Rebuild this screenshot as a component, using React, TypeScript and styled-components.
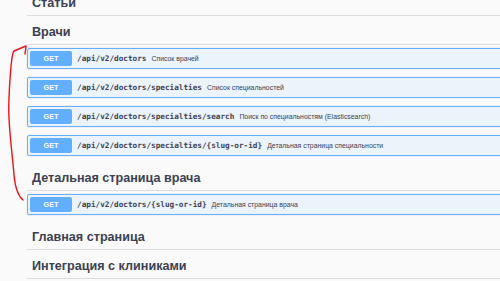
import React from 'react';
import styled, { createGlobalStyle } from 'styled-components';

const GlobalStyle = createGlobalStyle`
  html, body {
    margin: 0;
    padding: 0;
    background: #fafafa;
    overflow: hidden;
  }
`;

interface Operation {
  method: string;
  path: string;
  summary: string;
}

interface Tag {
  name: string;
  operations: Operation[];
}

const tags: Tag[] = [
  { name: 'Статьи', operations: [] },
  {
    name: 'Врачи',
    operations: [
      { method: 'GET', path: '/api/v2/doctors', summary: 'Список врачей' },
      { method: 'GET', path: '/api/v2/doctors/specialties', summary: 'Список специальностей' },
      { method: 'GET', path: '/api/v2/doctors/specialties/search', summary: 'Поиск по специальностям (Elasticsearch)' },
      { method: 'GET', path: '/api/v2/doctors/specialties/{slug-or-id}', summary: 'Детальная страница специальности' }
    ]
  },
  {
    name: 'Детальная страница врача',
    operations: [
      { method: 'GET', path: '/api/v2/doctors/{slug-or-id}', summary: 'Детальная страница врача' }
    ]
  },
  { name: 'Главная страница', operations: [] },
  { name: 'Интеграция с клиниками', operations: [] }
];

const Page = styled.div`
  position: relative;
  width: 500px;
  height: 281px;
  overflow: hidden;
`;

const Wrapper = styled.div`
  width: 540px;
  margin-top: -13px;
  padding-left: 27px;
  display: flex;
  flex-direction: column;
  font-family: "Liberation Sans", Arial, sans-serif;
  color: #3b4151;
`;

const TagSection = styled.section`
  display: flex;
  flex-direction: column;
`;

const TagHeading = styled.h3`
  margin: 0;
  padding: 6px 0 2px 5px;
  height: 20px;
  line-height: 20px;
  font-size: 12.6px;
  font-weight: 700;
  color: #3b4151;
  border-bottom: 1px solid #dcdde0;
`;

const OpList = styled.div`
  display: flex;
  flex-direction: column;
  gap: 8px;
  padding: 3px 0 6px;
`;

const OpBlock = styled.div`
  display: flex;
  align-items: center;
  height: 15px;
  padding: 2px;
  border: 1px solid #61affe;
  border-radius: 2px;
  background: #ebf3fb;
  box-shadow: 0 0 2px rgba(0, 0, 0, 0.12);
`;

const MethodBadge = styled.span`
  flex: none;
  width: 42px;
  height: 15px;
  line-height: 15px;
  border-radius: 2px;
  background: #61affe;
  color: #fff;
  font-size: 7.2px;
  font-weight: 700;
  text-align: center;
`;

const OpPath = styled.span`
  margin-left: 5px;
  font-family: "DejaVu Sans Mono", "Liberation Mono", monospace;
  font-size: 7.7px;
  font-weight: 700;
  color: #3b4151;
  white-space: nowrap;
`;

const OpSummary = styled.span`
  margin-left: 5px;
  font-size: 6.9px;
  color: #3b4151;
  white-space: nowrap;
`;

const Annotation = styled.svg`
  position: absolute;
  left: 0;
  top: 0;
  pointer-events: none;
`;

export default function App() {
  return (
    <Page>
      <GlobalStyle />
      <Wrapper>
        {tags.map((tag) => (
          <TagSection key={tag.name}>
            <TagHeading>{tag.name}</TagHeading>
            {tag.operations.length > 0 && (
              <OpList>
                {tag.operations.map((op) => (
                  <OpBlock key={op.path}>
                    <MethodBadge>{op.method}</MethodBadge>
                    <OpPath>{op.path}</OpPath>
                    <OpSummary>{op.summary}</OpSummary>
                  </OpBlock>
                ))}
              </OpList>
            )}
          </TagSection>
        ))}
      </Wrapper>
      <Annotation width="40" height="210" viewBox="0 0 40 210">
        <path
          d="M23 200 C17 195 15 186 14 175 C13 160 10 140 9 118 C8 100 10 80 11 66 C12 58 12 54 14 51 L26 46 L25 54"
          fill="none"
          stroke="#e8141a"
          strokeWidth="1.4"
          strokeLinecap="round"
          strokeLinejoin="round"
        />
      </Annotation>
    </Page>
  );
}
